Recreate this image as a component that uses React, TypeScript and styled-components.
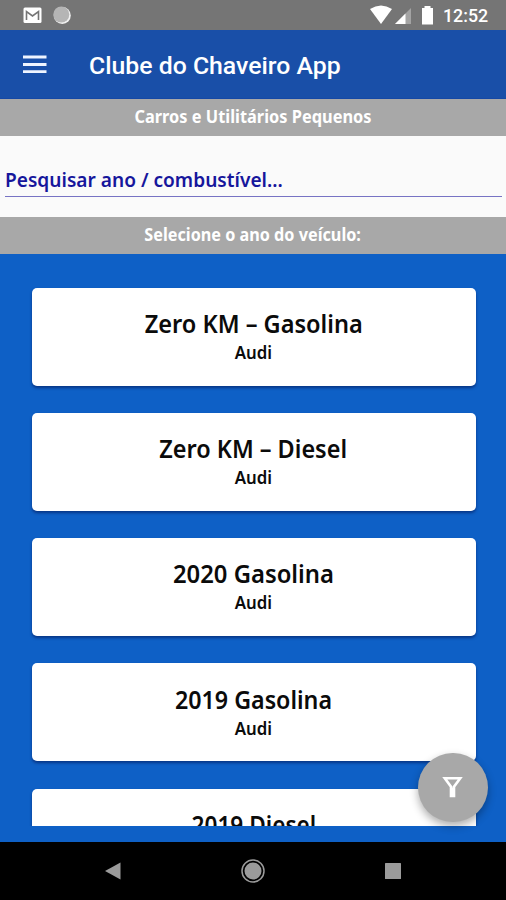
import React from 'react';
import styled, { createGlobalStyle } from 'styled-components';

const Global = createGlobalStyle`
  * { box-sizing: border-box; }
  body { margin: 0; background: #0e60c6; }
`;

const Screen = styled.div`
  position: relative;
  width: 506px;
  height: 900px;
  display: flex;
  flex-direction: column;
  overflow: hidden;
  background: #0e60c6;
  font-family: 'Noto Sans', 'Open Sans', sans-serif;
  white-space: nowrap;
`;

const StatusBar = styled.div`
  flex: none;
  height: 30px;
  display: flex;
  justify-content: space-between;
  background: #757575;
`;

const Clock = styled.time`
  width: 45px;
  margin: 0 18px 0 10px;
  font: 500 17.8px/32px Roboto, sans-serif;
  color: #fff;
`;

const StatusGroup = styled.div`
  display: flex;
`;

const AppBar = styled.header`
  flex: none;
  height: 69px;
  display: flex;
  align-items: center;
  padding-left: 23px;
  gap: 42px;
  background: #194fa8;
  border-bottom: 1px solid #1548a5;
`;

const MenuButton = styled.button`
  width: 24px;
  height: 20px;
  padding: 0;
  border: 0;
  background: none;
  display: flex;
`;

const AppTitle = styled.h1`
  margin: 3px 0 0;
  font: 500 24.8px/36px Roboto, sans-serif;
  color: #fff;
`;

const Fitted = styled.span<{ $stretch: number; $origin?: string }>`
  display: inline-block;
  transform: scaleX(${p => p.$stretch});
  transform-origin: ${p => p.$origin ?? 'center'};
`;

const SectionBar = styled.div`
  flex: none;
  height: 37px;
  background: #a8a8a8;
  color: #fff;
  text-align: center;
  font-size: 18.5px;
  font-weight: 700;
  line-height: 34px;
`;

const SearchArea = styled.div`
  flex: none;
  height: 81px;
  padding: 26px 4px 0 5px;
  background: #fafafa;
`;

const SearchField = styled.div`
  height: 35px;
  border-bottom: 1px solid #7773c4;
  color: #16169c;
  font-size: 20.5px;
  font-weight: 600;
  line-height: 35px;
`;

const List = styled.main`
  flex: none;
  height: 572px;
  padding: 33.5px 30.5px 0 31.5px;
  display: flex;
  flex-direction: column;
  gap: 27.3px;
  overflow: hidden;
`;

const Card = styled.article`
  flex: none;
  height: 98px;
  padding-top: 17.2px;
  border-radius: 5px;
  background: #fff;
  box-shadow: 0 2px 3px rgba(0, 18, 80, 0.55);
  text-align: center;
  color: #0b0b0b;
`;

const CardTitle = styled.h2`
  margin: 0;
  font-size: 25px;
  font-weight: 600;
  line-height: 36px;
`;

const CardBrand = styled.p`
  margin: 0;
  font-size: 17.5px;
  font-weight: 600;
  line-height: 23px;
`;

const FilterButton = styled.button`
  position: absolute;
  left: 418px;
  top: 752.5px;
  width: 69.5px;
  height: 69.5px;
  padding: 0;
  border: 0;
  border-radius: 50%;
  background: #a8a8a8;
  box-shadow: 0 4px 8px rgba(0, 0, 0, 0.32);
  display: grid;
  place-items: center;
`;

const NavigationBar = styled.nav`
  flex: none;
  height: 58px;
  margin-top: auto;
  padding: 0 43px;
  display: grid;
  grid-template-columns: repeat(3, 1fr);
  place-items: center;
  background: #000;
`;

const years = [
  { title: 'Zero KM – Gasolina', stretch: 0.942 },
  { title: 'Zero KM – Diesel', stretch: 0.938 },
  { title: '2020 Gasolina', stretch: 0.953 },
  { title: '2019 Gasolina', stretch: 0.93 },
  { title: '2019 Diesel', stretch: 0.905 },
];

export default function App() {
  return (
    <>
      <Global />
      <Screen>
        <StatusBar>
          <svg width="100" height="30" aria-hidden="true">
            <rect x="23.5" y="7.5" width="18" height="15.5" rx="1.5" fill="#fff" />
            <path d="M26.5 20V11.5L32.5 16L38.5 11.5V20" fill="none" stroke="#757575" strokeWidth="1.6" />
            <circle cx="62.3" cy="15.5" r="8.5" fill="#f0f0f0" />
            <circle cx="61.3" cy="14.5" r="8" fill="#b5b5b5" />
          </svg>
          <StatusGroup>
            <svg width="66" height="30" viewBox="368 0 66 30" aria-hidden="true">
              <path d="M371 9Q382 2 393 9L382 24Z" fill="#fff" />
              <path d="M396 24L412 8V24Z" fill="#a3a3a3" />
              <path d="M396 24L406.5 13.5V24Z" fill="#fff" />
              <path d="M425.5 6H431.5V8H434V24.5H423V8H425.5Z" fill="#fff" />
            </svg>
            <Clock>12:52</Clock>
          </StatusGroup>
        </StatusBar>
        <AppBar>
          <MenuButton aria-label="Menu">
            <svg width="24" height="20">
              <path d="M0 3H23.5M0 10.5H23.5M0 17.7H23.5" stroke="#eef4ff" strokeWidth="2.8" />
            </svg>
          </MenuButton>
          <AppTitle>Clube do Chaveiro App</AppTitle>
        </AppBar>
        <SectionBar><Fitted $stretch={0.885}>Carros e Utilitários Pequenos</Fitted></SectionBar>
        <SearchArea>
          <SearchField><Fitted $stretch={0.932} $origin="left">Pesquisar ano / combustível...</Fitted></SearchField>
        </SearchArea>
        <SectionBar><Fitted $stretch={0.876}>Selecione o ano do veículo:</Fitted></SectionBar>
        <List>
          {years.map(y => (
            <Card key={y.title}>
              <CardTitle><Fitted $stretch={y.stretch}>{y.title}</Fitted></CardTitle>
              <CardBrand><Fitted $stretch={0.96}>Audi</Fitted></CardBrand>
            </Card>
          ))}
        </List>
        <FilterButton aria-label="Filtrar">
          <svg width="22" height="24" viewBox="442 775.5 22 24">
            <path d="M444.8 778.8H460.2L454 787.2V796.4H451V787.2Z" fill="none" stroke="#fff" strokeWidth="2.6" />
            <path d="M452.5 788V797" stroke="#fff" strokeWidth="2.5" />
          </svg>
        </FilterButton>
        <NavigationBar>
          <svg width="18" height="18"><path d="M1 9L16.5 0.5V17.5Z" fill="#9b9b9b" /></svg>
          <svg width="26" height="26">
            <circle cx="13" cy="13" r="11" fill="none" stroke="#9b9b9b" strokeWidth="1.5" />
            <circle cx="13" cy="13" r="8.5" fill="#9b9b9b" />
          </svg>
          <svg width="16" height="16"><rect width="16" height="16" rx="0.5" fill="#9b9b9b" /></svg>
        </NavigationBar>
      </Screen>
    </>
  );
}
